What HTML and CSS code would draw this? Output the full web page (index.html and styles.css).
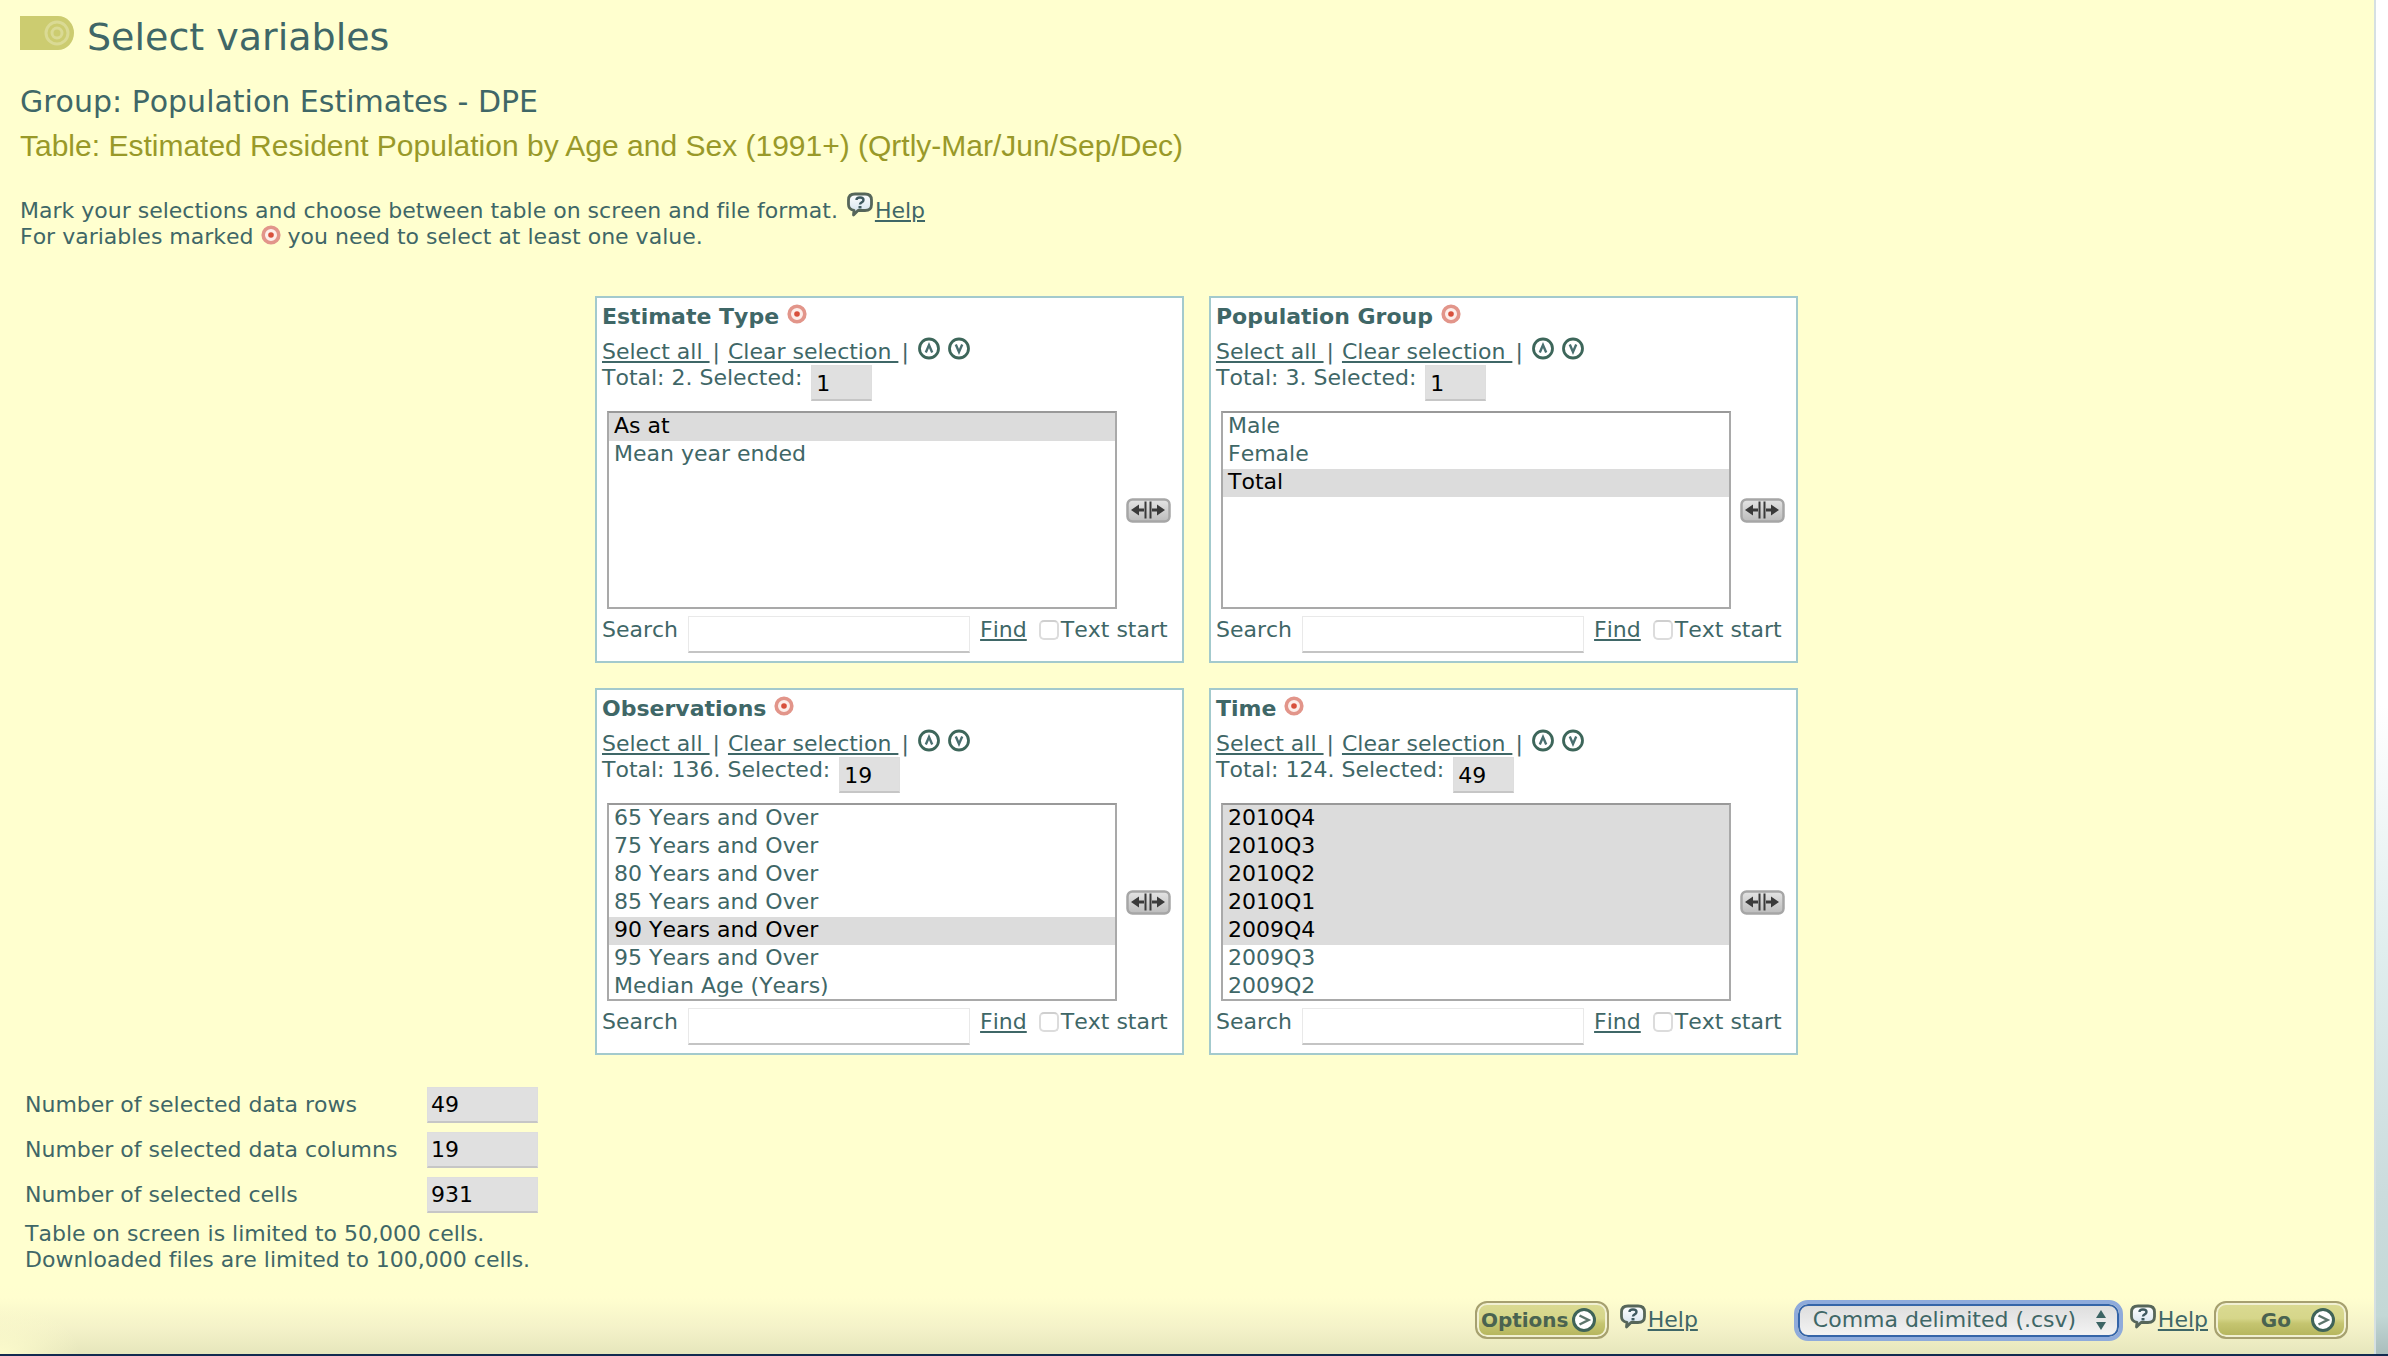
FILE: index.html
```html
<!DOCTYPE html>
<html lang="en">
<head>
<meta charset="utf-8">
<title>Select variables</title>
<link rel="stylesheet" href="styles.css">
</head>
<body>
<svg class="sprite" aria-hidden="true">
  <defs>
    <linearGradient id="bubble-fill" x1="0" y1="0" x2="0" y2="1">
      <stop offset="0" stop-color="#ffffff"/><stop offset="1" stop-color="#cfe0ec"/>
    </linearGradient>
    <linearGradient id="key-fill" x1="0" y1="0" x2="0" y2="1">
      <stop offset="0" stop-color="#e4e4e4"/><stop offset="1" stop-color="#bcbcbc"/>
    </linearGradient>
  </defs>
  <symbol id="mandatory" viewBox="0 0 20 20">
    <circle cx="10" cy="10" r="7.800" fill="#fdeeea" stroke="#e2958a" stroke-width="3.600"/>
    <circle cx="10" cy="10" r="2.800" fill="#d8503c"/>
  </symbol>
  <symbol id="bubble" viewBox="0 0 28 25">
    <path d="M9 2h10q6.500 0 6.500 6v4.500q0 6-6.500 6h-7l-4.500 4.500.5-4.700q-5.500-.8-5.500-5.800V8q0-6 6.500-6z" fill="url(#bubble-fill)" stroke="#56665a" stroke-width="2.800" stroke-linejoin="round"/>
    <path d="M10.500 8q0-2.500 3.500-2.500t3.500 2.500q0 1.500-1.800 2.400-1.700.9-1.700 2.100" fill="none" stroke="#3f5a60" stroke-width="2.400"/>
    <rect x="12.500" y="14" width="3" height="2.500" fill="#3f5a60"/>
  </symbol>
  <symbol id="up" viewBox="0 0 22 23">
    <circle cx="11" cy="11.500" r="9.500" fill="#fff" stroke="#3d665a" stroke-width="2.800"/>
    <path d="M7.800 15.500L11 8l3.200 7.500" fill="none" stroke="#4a6f70" stroke-width="2.400"/>
  </symbol>
  <symbol id="down" viewBox="0 0 22 23">
    <circle cx="11" cy="11.500" r="9.500" fill="#fff" stroke="#3d665a" stroke-width="2.800"/>
    <path d="M7.800 7.500L11 15l3.200-7.500" fill="none" stroke="#4a6f70" stroke-width="2.400"/>
  </symbol>
  <symbol id="widen" viewBox="0 0 45 25">
    <rect x="1.500" y="1.500" width="42" height="22" rx="5" fill="url(#key-fill)" stroke="#a6a6a6" stroke-width="2.500"/>
    <path d="M5 12l8-5.500v4h5v3h-5v4zM39 12l-8-5.500v4h-5v3h5v4z" fill="#3a3a3a"/>
    <path d="M19.500 3.500v17M24.500 3.500v17" stroke="#3a3a3a" stroke-width="2"/>
  </symbol>
  <symbol id="arrow" viewBox="0 0 24 24">
    <circle cx="12" cy="12" r="10.500" fill="#fff" stroke="#3f6358" stroke-width="3"/>
    <path d="M7.500 7.500L16.500 12l-9 4.500" fill="none" stroke="#5c756c" stroke-width="2.500"/>
  </symbol>
</svg>

<main class="page">
  <header class="heading">
    <svg class="logo" viewBox="0 0 54 34" aria-hidden="true">
      <path d="M0 0h38a16 17 0 0 1 0 34H0z" fill="#cccc70"/>
      <circle cx="37" cy="17" r="11" fill="none" stroke="#dada94" stroke-width="3"/>
      <circle cx="37" cy="17" r="5" fill="none" stroke="#dada94" stroke-width="3"/>
    </svg>
    <h1>Select variables</h1>
  </header>
  <h2 class="group">Group: Population Estimates - DPE</h2>
  <h3 class="table-name">Table: Estimated Resident Population by Age and Sex (1991+) (Qrtly-Mar/Jun/Sep/Dec)</h3>
  <div class="intro">
    <p>Mark your selections and choose between table on screen and file format. <svg class="bubble inline-bubble" aria-hidden="true"><use href="#bubble"/></svg><a href="#help">Help</a></p>
    <p>For variables marked <svg class="target" aria-hidden="true"><use href="#mandatory"/></svg> you need to select at least one value.</p>
  </div>

  <form>
    <div class="cards">
      <section class="card">
        <h4>Estimate Type <svg class="target" aria-hidden="true"><use href="#mandatory"/></svg></h4>
        <div class="actions"><a href="#all1">Select all </a><span class="bar">| </span><a href="#clear1">Clear selection </a><span class="bar">|</span><button type="button" class="round" aria-label="Sort up"><svg><use href="#up"/></svg></button><button type="button" class="round" aria-label="Sort down"><svg><use href="#down"/></svg></button></div>
        <div class="totals"><label for="count1">Total: 2. Selected:</label><input class="field grey count" id="count1" value="1" readonly></div>
        <div class="values">
          <select multiple aria-label="Estimate Type">
            <option selected>As at</option><option>Mean year ended</option>
          </select>
          <button type="button" class="widen" aria-label="Widen list"><svg><use href="#widen"/></svg></button>
        </div>
        <div class="search"><label for="search1">Search</label><input class="field query" id="search1" type="text"><a href="#find1">Find</a><label class="check"><input type="checkbox">Text start</label></div>
      </section>

      <section class="card">
        <h4>Population Group <svg class="target" aria-hidden="true"><use href="#mandatory"/></svg></h4>
        <div class="actions"><a href="#all2">Select all </a><span class="bar">| </span><a href="#clear2">Clear selection </a><span class="bar">|</span><button type="button" class="round" aria-label="Sort up"><svg><use href="#up"/></svg></button><button type="button" class="round" aria-label="Sort down"><svg><use href="#down"/></svg></button></div>
        <div class="totals"><label for="count2">Total: 3. Selected:</label><input class="field grey count" id="count2" value="1" readonly></div>
        <div class="values">
          <select multiple aria-label="Population Group">
            <option>Male</option><option>Female</option><option selected>Total</option>
          </select>
          <button type="button" class="widen" aria-label="Widen list"><svg><use href="#widen"/></svg></button>
        </div>
        <div class="search"><label for="search2">Search</label><input class="field query" id="search2" type="text"><a href="#find2">Find</a><label class="check"><input type="checkbox">Text start</label></div>
      </section>

      <section class="card">
        <h4>Observations <svg class="target" aria-hidden="true"><use href="#mandatory"/></svg></h4>
        <div class="actions"><a href="#all3">Select all </a><span class="bar">| </span><a href="#clear3">Clear selection </a><span class="bar">|</span><button type="button" class="round" aria-label="Sort up"><svg><use href="#up"/></svg></button><button type="button" class="round" aria-label="Sort down"><svg><use href="#down"/></svg></button></div>
        <div class="totals"><label for="count3">Total: 136. Selected:</label><input class="field grey count" id="count3" value="19" readonly></div>
        <div class="values">
          <select multiple aria-label="Observations">
            <option>65 Years and Over</option><option>75 Years and Over</option><option>80 Years and Over</option><option>85 Years and Over</option><option selected>90 Years and Over</option><option>95 Years and Over</option><option>Median Age (Years)</option>
          </select>
          <button type="button" class="widen" aria-label="Widen list"><svg><use href="#widen"/></svg></button>
        </div>
        <div class="search"><label for="search3">Search</label><input class="field query" id="search3" type="text"><a href="#find3">Find</a><label class="check"><input type="checkbox">Text start</label></div>
      </section>

      <section class="card">
        <h4>Time <svg class="target" aria-hidden="true"><use href="#mandatory"/></svg></h4>
        <div class="actions"><a href="#all4">Select all </a><span class="bar">| </span><a href="#clear4">Clear selection </a><span class="bar">|</span><button type="button" class="round" aria-label="Sort up"><svg><use href="#up"/></svg></button><button type="button" class="round" aria-label="Sort down"><svg><use href="#down"/></svg></button></div>
        <div class="totals"><label for="count4">Total: 124. Selected:</label><input class="field grey count" id="count4" value="49" readonly></div>
        <div class="values">
          <select multiple aria-label="Time">
            <option selected>2010Q4</option><option selected>2010Q3</option><option selected>2010Q2</option><option selected>2010Q1</option><option selected>2009Q4</option><option>2009Q3</option><option>2009Q2</option>
          </select>
          <button type="button" class="widen" aria-label="Widen list"><svg><use href="#widen"/></svg></button>
        </div>
        <div class="search"><label for="search4">Search</label><input class="field query" id="search4" type="text"><a href="#find4">Find</a><label class="check"><input type="checkbox">Text start</label></div>
      </section>
    </div>

    <div class="summary">
      <label for="rows">Number of selected data rows</label><input class="field grey" id="rows" value="49" readonly>
      <label for="columns">Number of selected data columns</label><input class="field grey" id="columns" value="19" readonly>
      <label for="cells">Number of selected cells</label><input class="field grey" id="cells" value="931" readonly>
    </div>
    <p class="limits">Table on screen is limited to 50,000 cells.<br>Downloaded files are limited to 100,000 cells.</p>

    <div class="toolbar">
      <button type="button" class="pill options"><span>Options</span><svg><use href="#arrow"/></svg></button>
      <div class="help"><svg class="bubble" aria-hidden="true"><use href="#bubble"/></svg><a href="#options-help">Help</a></div>
      <div class="format">
        <select aria-label="File format"><option>Comma delimited (.csv)</option></select>
        <svg viewBox="0 0 10 20" aria-hidden="true"><path d="M0 8l5-8 5 8zM0 12l5 8 5-8z" fill="#3c6464"/></svg>
      </div>
      <div class="help"><svg class="bubble" aria-hidden="true"><use href="#bubble"/></svg><a href="#format-help">Help</a></div>
      <button type="button" class="pill go"><span>Go</span><svg><use href="#arrow"/></svg></button>
    </div>
  </form>
</main>
</body>
</html>
```
FILE: styles.css
```css
* {
  box-sizing: border-box;
}

body {
  margin: 0;
  min-height: 100vh;
  display: flex;
  padding-right: 12px;
  border-bottom: 2px solid #132a50;
  background: linear-gradient(#ffffff 52%, #e0eeee 70%, #cbdcdd 88%, #c3d8d6 97%, #a9bcbb);
  color: #3f6767;
  font: 22px/26px Verdana, "DejaVu Sans", sans-serif;
  font-kerning: none;
  font-variant-ligatures: none;
}

.sprite {
  position: absolute;
  width: 0;
  height: 0;
}

h1, h2, h3, h4, p {
  margin: 0;
  font-weight: normal;
}

a {
  color: inherit;
  text-decoration: underline;
  text-decoration-thickness: 2px;
  text-underline-offset: 2px;
}

button {
  padding: 0;
  border: 0;
  background: none;
  color: inherit;
}

svg {
  flex: none;
}

.page {
  flex: 1;
  padding: 15px 1px 11px 20px;
  border-right: 2px solid #d6e0e2;
  background:
    radial-gradient(ellipse 80px 50px at 0 100%, #fcfbcc, #fcfbcc00),
    linear-gradient(to top, #e6e6bc, #f3f1c8 24px, #fffecf 56px, #ffffcf 70px);
}

/* Headings */
.heading {
  display: flex;
  gap: 13px;
}

.logo {
  width: 54px;
  height: 34px;
  margin-top: 1px;
}

h1 {
  font-size: 38px;
  line-height: 44px;
}

.group {
  margin-top: 25px;
  font-size: 30px;
  line-height: 36px;
}

.table-name {
  margin-top: 9px;
  color: #999929;
  font: 30px/34px "Liberation Sans", Arial, sans-serif;
  font-kerning: auto;
}

.intro {
  margin: 35px 0 46px;
}

.target {
  width: 20px;
  height: 20px;
  vertical-align: -1px;
}

.bubble {
  width: 28px;
  height: 25px;
}

.inline-bubble {
  margin: -8px 1px 0;
  vertical-align: 1px;
}

/* Variable cards */
.cards {
  display: grid;
  grid-template-columns: repeat(2, minmax(0, 589px));
  gap: 25px;
  justify-content: center;
}

.card {
  padding: 6px 5px 8px;
  border: 2px solid #a3cacd;
  background: #ffffff;
}

.card h4 {
  font-weight: bold;
}

.card .target {
  vertical-align: 0;
}

.actions {
  display: flex;
  margin-top: 9px;
  white-space: pre;
}

.bar {
  margin: 0 1px 0 3px;
}

.round {
  width: 22px;
  height: 23px;
  margin: -2px 0 0 8px;
}

.round svg {
  display: block;
  width: 22px;
  height: 23px;
}

.totals {
  display: flex;
  gap: 9px;
}

.field {
  min-width: 0;
  height: 36px;
  padding: 0 3px;
  border: 1px solid #e9e9e9;
  border-bottom: 2px solid #c4c4c4;
  border-radius: 0;
  outline: 0;
  background: #ffffff;
  color: #000000;
  font: inherit;
}

.grey {
  border-color: #dedede #dedede #c6c6c6;
  background: #e0e0e0;
}

.count {
  width: 61px;
  padding: 2px 4px 0;
}

.values {
  display: flex;
  align-items: center;
  gap: 9px;
  margin-top: 10px;
  padding: 0 6px 0 5px;
}

.values select {
  flex: 1;
  min-width: 0;
  height: 198px;
  padding: 0;
  overflow: hidden;
  border: 2px solid #a9a9a9;
  border-top-color: #999999;
  border-radius: 0;
  background: #ffffff;
  color: inherit;
  font: inherit;
}

.values option {
  height: 28px;
  padding: 0 5px;
  line-height: 28px;
}

.values option:checked {
  background: #dcdcdc linear-gradient(#dcdcdc, #dcdcdc);
  color: #000000;
}

.widen,
.widen svg {
  display: block;
  width: 45px;
  height: 25px;
}

.search {
  display: flex;
  align-items: flex-start;
  gap: 10px;
  margin-top: 7px;
  white-space: nowrap;
}

.search > a,
.search > label {
  padding-top: 1px;
}

.query {
  flex: 0 1 282px;
  height: 37px;
}

.check {
  display: flex;
  align-items: center;
  gap: 2px;
  margin-left: 2px;
}

.check input {
  appearance: none;
  width: 20px;
  height: 20px;
  margin: 0;
  border: 2px solid #dcdcdc;
  border-top-color: #cfcfcf;
  border-radius: 5px;
  background: #ffffff;
}

/* Selection summary */
.summary {
  display: grid;
  grid-template-columns: 402px 111px;
  row-gap: 9px;
  align-items: center;
  margin: 32px 0 0 5px;
}

.limits {
  margin: 8px 0 0 5px;
}

/* Bottom toolbar */
.toolbar {
  display: flex;
  align-items: center;
  justify-content: flex-end;
  margin: 28px 25px 0 0;
}

.pill {
  display: flex;
  align-items: center;
  justify-content: center;
  gap: 3px;
  width: 134px;
  height: 38px;
  border: 2px solid #a6a070;
  border-radius: 12px;
  box-shadow: inset 0 0 0 2px #f1f0d2;
  background: linear-gradient(#dada92, #d6d68a 45%, #c5c570 60%, #b4b45c);
  color: #4a6350;
  font: bold 20px/26px Verdana, "DejaVu Sans", sans-serif;
}

.pill svg {
  width: 24px;
  height: 24px;
}

.options {
  padding-right: 7px;
}

.go {
  justify-content: flex-end;
  gap: 20px;
  padding-right: 11px;
}

.help {
  display: flex;
  gap: 1px;
  margin: 0 6px 0 10px;
}

.help .bubble {
  margin-top: -3px;
}

.format {
  display: grid;
  align-items: center;
  width: 321px;
  margin: 0 0 0 94px;
}

.format > * {
  grid-area: 1 / 1;
}

.format select {
  appearance: none;
  width: 100%;
  height: 33px;
  padding: 0 13px;
  border: 2px solid #3565a8;
  border-radius: 10px;
  outline: 4px solid #8fabdb;
  background: linear-gradient(#dedede, #f3f3f3);
  color: inherit;
  font: inherit;
}

.format svg {
  justify-self: end;
  width: 10px;
  height: 20px;
  margin-right: 13px;
  pointer-events: none;
}
```
